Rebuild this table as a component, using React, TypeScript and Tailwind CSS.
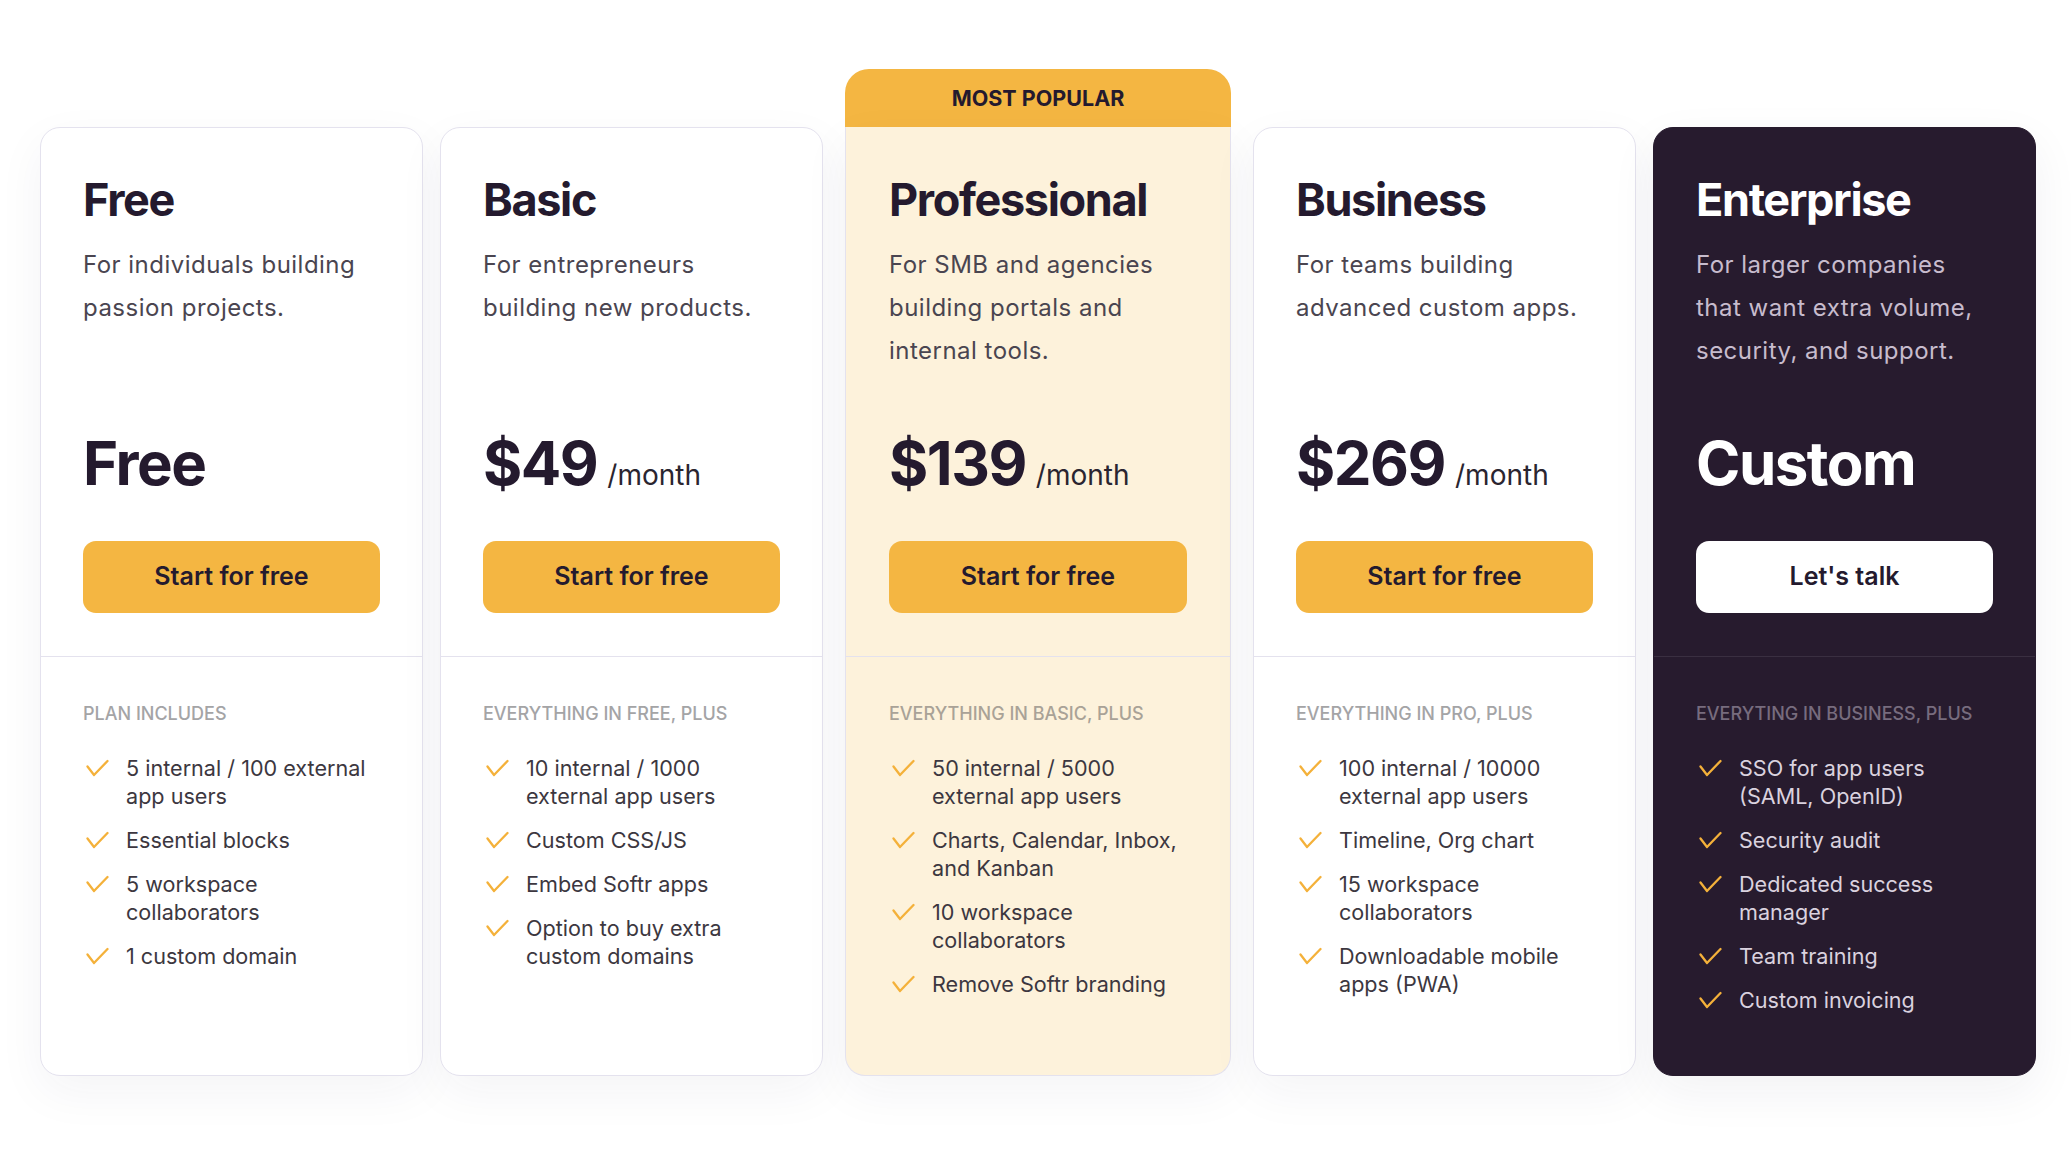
import React from "react";

type Variant = "light" | "pro" | "dark";

type Plan = {
  name: string;
  desc: string;
  price: string;
  per: boolean;
  cta: string;
  label: string;
  features: string[];
  variant: Variant;
};

const plans: Plan[] = [
  {
    name: "Free",
    desc: "For individuals building passion projects.",
    price: "Free",
    per: false,
    cta: "Start for free",
    label: "PLAN INCLUDES",
    features: [
      "5 internal / 100 external app users",
      "Essential blocks",
      "5 workspace collaborators",
      "1 custom domain",
    ],
    variant: "light",
  },
  {
    name: "Basic",
    desc: "For entrepreneurs building new products.",
    price: "$49",
    per: true,
    cta: "Start for free",
    label: "EVERYTHING IN FREE, PLUS",
    features: [
      "10 internal / 1000 external app users",
      "Custom CSS/JS",
      "Embed Softr apps",
      "Option to buy extra custom domains",
    ],
    variant: "light",
  },
  {
    name: "Professional",
    desc: "For SMB and agencies building portals and internal tools.",
    price: "$139",
    per: true,
    cta: "Start for free",
    label: "EVERYTHING IN BASIC, PLUS",
    features: [
      "50 internal / 5000 external app users",
      "Charts, Calendar, Inbox, and Kanban",
      "10 workspace collaborators",
      "Remove Softr branding",
    ],
    variant: "pro",
  },
  {
    name: "Business",
    desc: "For teams building advanced custom apps.",
    price: "$269",
    per: true,
    cta: "Start for free",
    label: "EVERYTHING IN PRO, PLUS",
    features: [
      "100 internal / 10000 external app users",
      "Timeline, Org chart",
      "15 workspace collaborators",
      "Downloadable mobile apps (PWA)",
    ],
    variant: "light",
  },
  {
    name: "Enterprise",
    desc: "For larger companies that want extra volume, security, and support.",
    price: "Custom",
    per: false,
    cta: "Let's talk",
    label: "EVERYTING IN BUSINESS, PLUS",
    features: [
      "SSO for app users (SAML, OpenID)",
      "Security audit",
      "Dedicated success manager",
      "Team training",
      "Custom invoicing",
    ],
    variant: "dark",
  },
];

function Check() {
  return (
    <svg width="23" height="18" viewBox="0 0 23 18" fill="none" className="ml-[3px]">
      <path
        d="M1.5 7.5 L8 16 L21.5 2"
        stroke="#F4B13A"
        strokeWidth="2.3"
        strokeLinecap="round"
        strokeLinejoin="round"
      />
    </svg>
  );
}

function CardBody({ plan, className }: { plan: Plan; className: string }) {
  const dark = plan.variant === "dark";
  const pro = plan.variant === "pro";
  const px = pro ? "px-[43px]" : "px-[42px]";
  return (
    <div className={`flex flex-col border ${className}`}>
      <div className={`${px} pb-[43px] ${pro ? "pt-[46px]" : "pt-[45px]"}`}>
        <h2
          className={`text-[45px] leading-[54px] font-bold tracking-[-0.03em] ${
            dark ? "text-white" : "text-[#241a2e]"
          }`}
        >
          {plan.name}
        </h2>
        <p
          className={`mt-[16px] h-[130px] text-[24px] leading-[43.2px] tracking-[0.02em] ${
            dark ? "text-[#c7bccd]" : "text-[#4a4550]"
          }`}
        >
          {plan.desc}
        </p>
        <div className="mt-[60px] flex h-[60px] items-baseline">
          <span
            className={`text-[60px] leading-[60px] font-bold tracking-[-0.025em] ${
              dark ? "text-white" : "text-[#241a2e]"
            }`}
          >
            {plan.price}
          </span>
          {plan.per && (
            <span className="ml-[10px] text-[28px] leading-[34px] text-[#2a2530]">/month</span>
          )}
        </div>
        <button
          className={`mt-[48px] flex h-[72px] w-full items-center justify-center rounded-[13px] text-[25px] font-semibold text-[#241a2e] ${
            dark ? "bg-white" : "bg-[#f4b642]"
          }`}
        >
          {plan.cta}
        </button>
      </div>
      <div
        className={`flex-1 border-t ${px} pt-[45px] pb-[61px] ${
          dark ? "border-[#3a2f41]" : "border-[#e4e2ee]"
        }`}
      >
        <div
          className={`text-[18px] leading-[24px] font-medium ${
            dark ? "text-[#776c7e]" : pro ? "text-[#a9a297]" : "text-[#a4a4a6]"
          }`}
        >
          {plan.label}
        </div>
        <ul className="mt-[28px] flex flex-col gap-[16px]">
          {plan.features.map((f) => (
            <li key={f} className="flex items-start">
              <span className="flex h-[28px] w-[43px] shrink-0 items-center">
                <Check />
              </span>
              <span
                className={`text-[21.6px] leading-[28px] ${
                  dark ? "text-[#dad2df]" : "text-[#3c3740]"
                }`}
              >
                {f}
              </span>
            </li>
          ))}
        </ul>
      </div>
    </div>
  );
}

export default function App() {
  return (
    <div className="min-h-[1156px] w-full bg-white font-['Inter',sans-serif]">
      <div className="flex items-stretch pt-[69px] pl-[40px]">
        <div className="mt-[58px] flex w-[383px] shrink-0">
          <CardBody
            plan={plans[0]}
            className="w-full rounded-[20px] border-[#e4e2ee] bg-white shadow-[0_16px_48px_rgba(40,30,70,0.05)]"
          />
        </div>
        <div className="ml-[17px] mt-[58px] flex w-[383px] shrink-0">
          <CardBody
            plan={plans[1]}
            className="w-full rounded-[20px] border-[#e4e2ee] bg-white shadow-[0_16px_48px_rgba(40,30,70,0.05)]"
          />
        </div>
        <div className="ml-[22px] flex w-[386px] shrink-0 flex-col">
          <div className="flex h-[58px] items-center justify-center rounded-t-[24px] bg-[#f4b642] text-[21.5px] font-bold text-[#241a2e]">
            MOST POPULAR
          </div>
          <CardBody
            plan={plans[2]}
            className="flex-1 rounded-b-[20px] border-t-0 border-[#e4e2ee] bg-[#fdf2db] shadow-[0_16px_48px_rgba(40,30,70,0.05)]"
          />
        </div>
        <div className="ml-[22px] mt-[58px] flex w-[383px] shrink-0">
          <CardBody
            plan={plans[3]}
            className="w-full rounded-[20px] border-[#e4e2ee] bg-white shadow-[0_16px_48px_rgba(40,30,70,0.05)]"
          />
        </div>
        <div className="ml-[17px] mt-[58px] flex w-[383px] shrink-0">
          <CardBody
            plan={plans[4]}
            className="w-full rounded-[20px] border-[#271b2e] bg-[#271b2e] shadow-[0_16px_48px_rgba(40,30,70,0.06)]"
          />
        </div>
      </div>
    </div>
  );
}
